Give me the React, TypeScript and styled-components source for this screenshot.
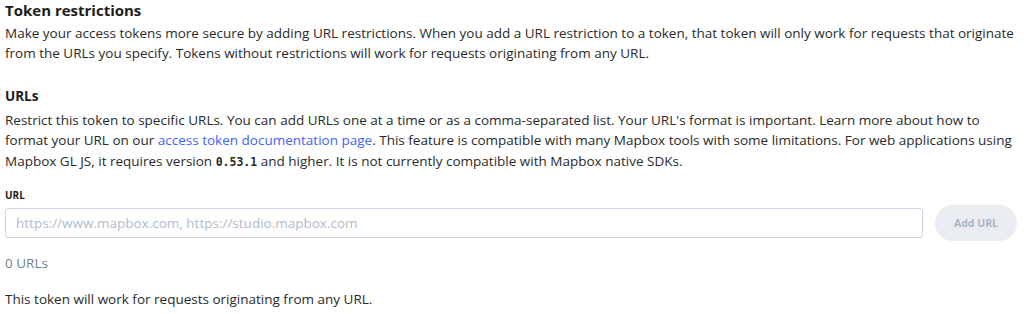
import React, { useState } from "react";
import styled, { createGlobalStyle } from "styled-components";

const GlobalStyle = createGlobalStyle`
  html, body {
    margin: 0;
    padding: 0;
    background: #fff;
  }
  body {
    font-family: "Open Sans", "Liberation Sans", sans-serif;
    color: #273d56;
  }
`;

const Page = styled.div`
  padding: 0 7px 0 5px;
  width: 1024px;
  box-sizing: border-box;
`;

const Title = styled.h2`
  margin: 0 0 3px;
  font-size: 15px;
  line-height: 20px;
  font-weight: 700;
  color: #1c1c1c;
`;

const SubTitle = styled.h3`
  margin: 20px 0 2px;
  font-size: 13.5px;
  line-height: 24px;
  font-weight: 700;
  color: #1c1c1c;
`;

const Text = styled.p<{ muted?: boolean }>`
  margin: 0;
  font-size: 13.5px;
  line-height: 20.4px;
  color: ${({ muted }) => (muted ? "#6c7f92" : "#2a2a2a")};
`;

const Link = styled.a`
  color: #4264fb;
  text-decoration: none;
`;

const Code = styled.code`
  font-family: "DejaVu Sans Mono", "Liberation Mono", monospace;
  font-size: 11.5px;
  font-weight: 700;
  color: #2a2a2a;
`;

const Field = styled.div`
  margin-top: 16px;
`;

const Label = styled.label`
  display: block;
  font-size: 10px;
  line-height: 14px;
  font-weight: 700;
  color: #1c1c1c;
`;

const Row = styled.div`
  display: flex;
  align-items: center;
  gap: 12px;
  margin-top: 3px;
`;

const Input = styled.input`
  flex: 1;
  height: 30px;
  box-sizing: border-box;
  border: 1px solid #cbd5e1;
  border-radius: 3px;
  padding: 0 10px;
  font-family: inherit;
  font-size: 13.5px;
  color: #273d56;
  outline: none;
  &::placeholder {
    color: #b0bccb;
  }
`;

const Button = styled.button`
  height: 36px;
  width: 82px;
  padding: 0;
  border: none;
  border-radius: 18px;
  background: #e9edf2;
  color: #a8b6c6;
  font-family: inherit;
  font-size: 10.5px;
  font-weight: 700;
  cursor: default;
`;

const Count = styled(Text)`
  margin-top: 12px;
`;

const Note = styled(Text)`
  margin-top: 16px;
`;

export default function App() {
  const [value, setValue] = useState("");
  return (
    <Page>
      <GlobalStyle />
      <Title>Token restrictions</Title>
      <Text>
        Make your access tokens more secure by adding URL restrictions. When
        you add a URL restriction to a token, that token will only work for
        requests that originate from the URLs you specify. Tokens without
        restrictions will work for requests originating from any URL.
      </Text>
      <SubTitle>URLs</SubTitle>
      <Text>
        Restrict this token to specific URLs. You can add URLs one at a time or
        as a comma-separated list. Your URL's format is important. Learn more
        about how to format your URL on our{" "}
        <Link href="#">access token documentation page</Link>. This feature is
        compatible with many Mapbox tools with some limitations. For web
        applications using Mapbox GL JS, it requires version{" "}
        <Code>0.53.1</Code> and higher. It is not currently compatible with
        Mapbox native SDKs.
      </Text>
      <Field>
        <Label htmlFor="url">URL</Label>
        <Row>
          <Input
            id="url"
            value={value}
            onChange={(e) => setValue(e.target.value)}
            placeholder="https://www.mapbox.com, https://studio.mapbox.com"
          />
          <Button disabled>Add URL</Button>
        </Row>
      </Field>
      <Count muted>0 URLs</Count>
      <Note>This token will work for requests originating from any URL.</Note>
    </Page>
  );
}
